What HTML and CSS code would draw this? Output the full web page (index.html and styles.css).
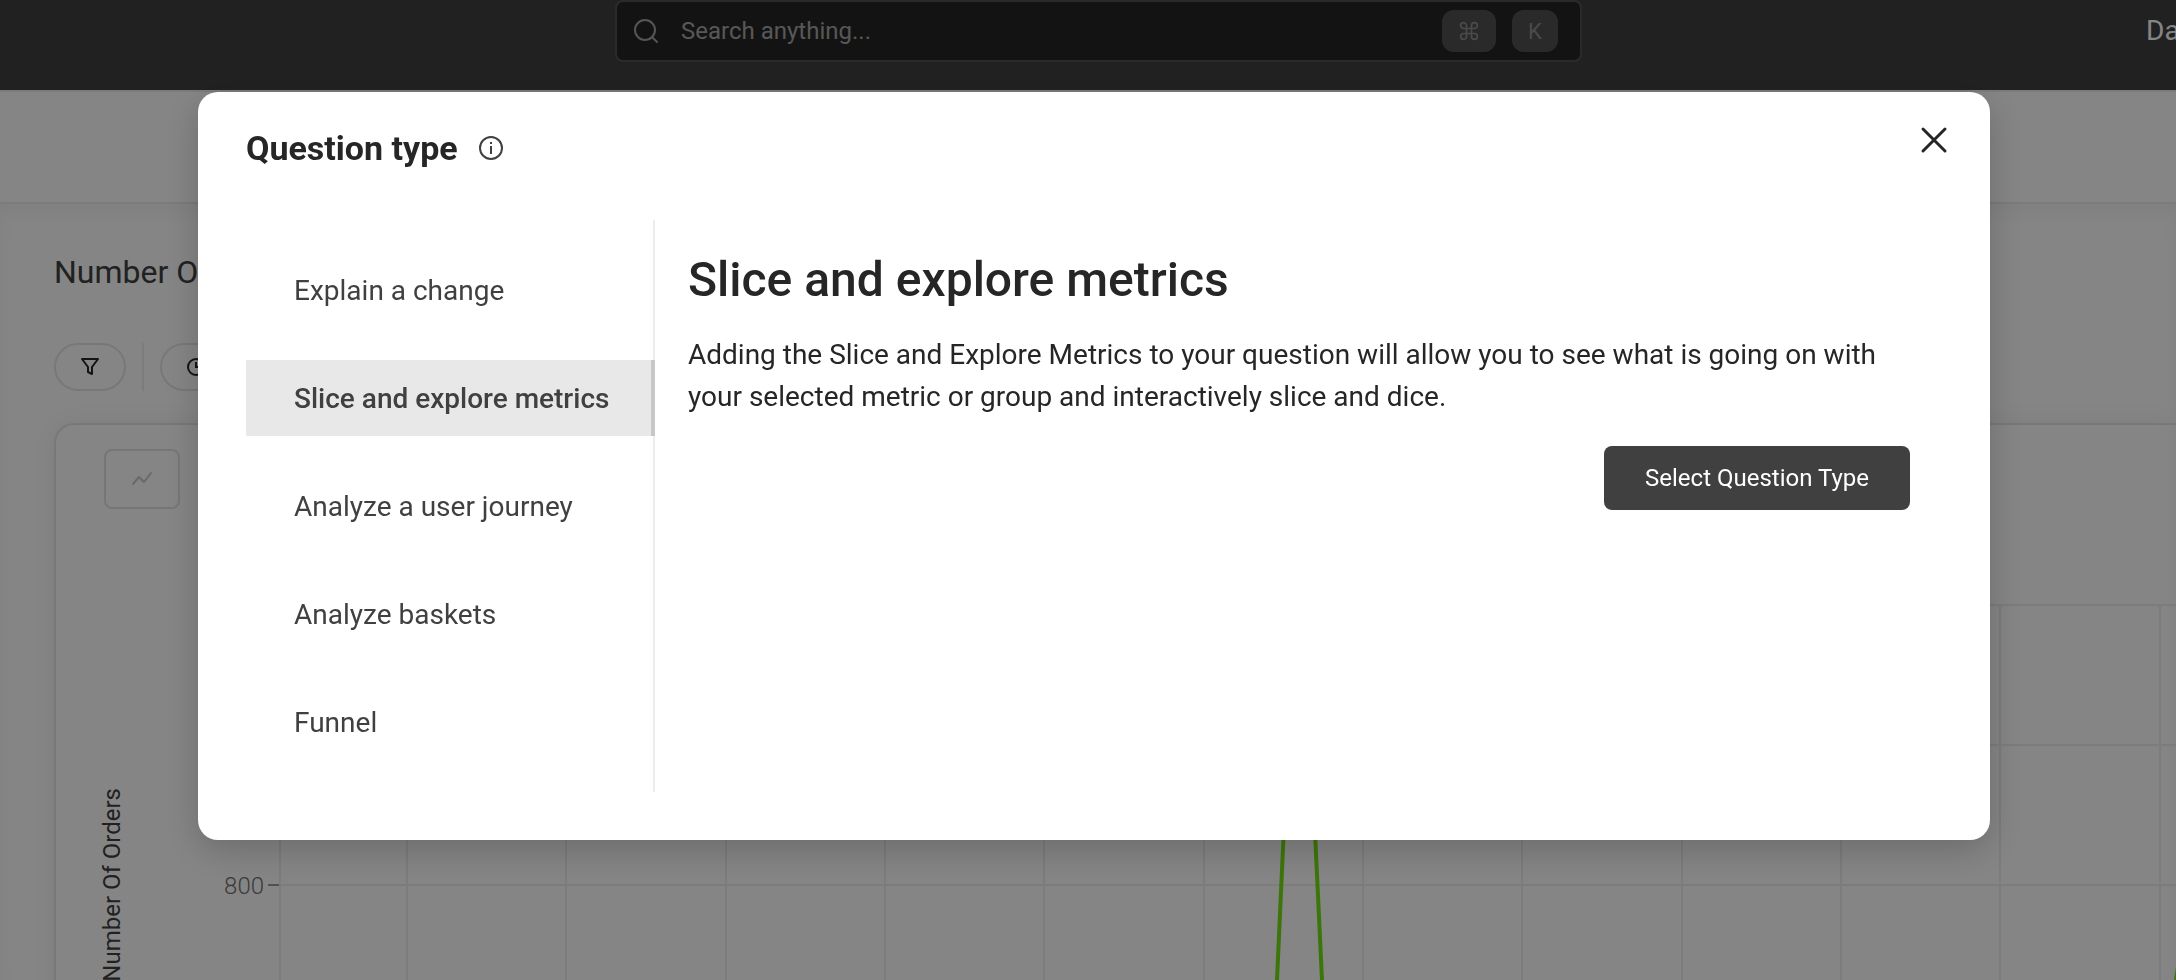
FILE: index.html
```html
<!DOCTYPE html>
<html lang="en">
<head>
<meta charset="utf-8">
<title>Question type</title>
<link rel="stylesheet" href="styles.css">
</head>
<body>
<div class="app">
  <header class="topbar">
    <label class="search">
      <svg class="search-icon" width="26" height="26" viewBox="0 0 26 26" fill="none" stroke="currentColor" stroke-width="2" stroke-linecap="round"><circle cx="12" cy="12" r="10"/><path d="M19 19l5 5"/></svg>
      <input class="search-input" type="text" placeholder="Search anything..." aria-label="Search">
      <kbd class="key key-cmd"><svg width="20" height="20" viewBox="0 0 24 24" fill="none" stroke="currentColor" stroke-width="2"><path d="M9 9V5.500A3.500 3.500 0 1 0 5.500 9h13A3.500 3.500 0 1 0 15 5.500v13a3.500 3.500 0 1 0 3.500-3.500h-13A3.500 3.500 0 1 0 9 18.500z"/></svg></kbd>
      <kbd class="key">K</kbd>
    </label>
    <a class="top-link" href="#">Da</a>
  </header>
  <div class="subbar"></div>
  <main class="page">
    <h1 class="page-title">Number Of Orders</h1>
    <div class="filters">
      <button class="pill" aria-label="Filter"><svg width="20" height="20" viewBox="0 0 20 20" fill="none" stroke="currentColor" stroke-width="2" stroke-linejoin="round"><path d="M2 2h16l-6 8v7l-4-2v-5z"/></svg></button>
      <span class="filter-divider"></span>
      <button class="pill" aria-label="Time range"><svg width="20" height="20" viewBox="0 0 20 20" fill="none" stroke="currentColor" stroke-width="2"><circle cx="10" cy="10" r="8"/><path d="M10 5v5h4"/></svg></button>
    </div>
    <section class="card">
      <button class="chart-type" aria-label="Line chart"><svg width="22" height="16" viewBox="0 0 22 16" fill="none" stroke="currentColor" stroke-width="2" stroke-linecap="round" stroke-linejoin="round"><path d="M2 13l6-7 5 5 7-9"/></svg></button>
      <div class="chart">
        <div class="axis-title">Number Of Orders</div>
        <div class="axis-ticks"><span class="tick">800</span></div>
        <svg class="plot" width="100%" height="376">
          <g class="grid">
            <path d="M12 0v376M139 0v376M298 0v376M458 0v376M617 0v376M776 0v376M936 0v376M1095 0v376M1254 0v376M1414 0v376M1573 0v376M1732 0v376M1892 0v376"/>
            <line x1="12" x2="100%" y1="1" y2="1"/><line x1="12" x2="100%" y1="141" y2="141"/><line x1="12" x2="100%" y1="281" y2="281"/>
          </g>
          <path class="tick-mark" d="M0 281h11"/>
          <path class="series" d="M1009 376L1031 -109L1054 376M1908 376l60 -400"/>
        </svg>
      </div>
    </section>
  </main>
</div>

<div class="overlay">
  <div class="modal" role="dialog" aria-modal="true" aria-labelledby="dialog-title">
    <header class="modal-header">
      <h2 class="modal-title" id="dialog-title">Question type</h2>
      <svg class="info" width="26" height="26" viewBox="0 0 26 26" fill="none" stroke="currentColor" stroke-width="2"><circle cx="13" cy="13" r="11"/><path d="M13 11v8M13 7v2"/></svg>
      <button class="close" aria-label="Close"><svg width="28" height="28" viewBox="0 0 28 28" fill="none" stroke="currentColor" stroke-width="3" stroke-linecap="round"><path d="M3 3l22 22M25 3L3 25"/></svg></button>
    </header>
    <div class="modal-body">
      <nav class="types">
        <button class="type">Explain a change</button>
        <button class="type type-active" aria-current="true">Slice and explore metrics</button>
        <button class="type">Analyze a user journey</button>
        <button class="type">Analyze baskets</button>
        <button class="type">Funnel</button>
      </nav>
      <section class="detail">
        <h3 class="detail-title">Slice and explore metrics</h3>
        <p class="detail-text">Adding the Slice and Explore Metrics to your question will allow you to see what is going on with your selected metric or group and interactively slice and dice.</p>
        <button class="select">Select Question Type</button>
      </section>
    </div>
  </div>
</div>
</body>
</html>
```
FILE: styles.css
```css
* { box-sizing: border-box; }
body { margin: 0; font-family: Roboto, "Liberation Sans", sans-serif; color: #262626; background: #fff; }
button, input, kbd { font: inherit; color: inherit; }
button { cursor: pointer; background: none; border: 0; padding: 0; }
h1, h2, h3, p { margin: 0; }
svg { display: block; flex: none; }

.app { height: 100vh; overflow: hidden; display: flex; flex-direction: column; }

.topbar { flex: none; height: 92px; display: grid; grid-template-columns: minmax(0, 1fr) 594px; align-items: start; padding-left: 615px; background: #404040; border-bottom: 2px solid #ececec; overflow: hidden; }
.search { height: 62px; display: flex; align-items: center; padding: 0 22px 0 16px; background: #262626; border: 2px solid #525252; border-radius: 8px; color: #a3a3a3; }
.search-input { flex: 1; min-width: 0; margin-left: 22px; padding: 0; background: none; border: 0; outline: 0; font-size: 24px; }
.search-input::placeholder { color: #a8a8a8; opacity: 1; }
.key { height: 42px; width: 46px; display: flex; align-items: center; justify-content: center; background: #525252; border-radius: 12px; color: #8f8f8f; font-size: 22px; }
.key-cmd { width: 54px; margin-right: 16px; }
.top-link { line-height: 62px; color: #fff; font-size: 28px; text-decoration: none; white-space: nowrap; justify-self: end; width: 30px; }

.subbar { flex: none; height: 112px; border-bottom: 2px solid #ebebeb; }
.page { flex: 1; min-height: 0; padding: 46px 0 0 54px; box-shadow: inset 0 12px 24px -8px #f2f2f2; display: flex; flex-direction: column; background: #fff; }
.page-title { font-size: 32px; line-height: 44px; font-weight: 400; color: #404040; }
.filters { display: flex; gap: 16px; margin: 49px 0 32px; align-items: center; }
.pill { width: 72px; height: 48px; display: flex; align-items: center; justify-content: center; border: 2px solid #e6e6e6; border-radius: 24px; }
.filter-divider { width: 2px; height: 48px; background: #ededed; }
.card { flex: none; height: 640px; padding: 24px 0 0 48px; border: 2px solid #e6e6e6; border-right: 0; border-radius: 20px 0 0 20px; box-shadow: 0 0 24px rgba(0, 0, 0, .06); }
.chart-type { width: 76px; height: 60px; display: flex; align-items: center; justify-content: center; border: 2px solid #e3e3e3; border-radius: 8px; color: #c9c9c9; }
.chart { display: grid; grid-template-columns: 16px 148px minmax(0, 1fr); padding-top: 95px; }
.axis-title { margin-top: 184px; font-size: 24px; line-height: 20px; writing-mode: vertical-rl; transform: rotate(180deg); white-space: nowrap; color: #404040; justify-self: center; align-self: start; }
.axis-ticks { padding: 266px 4px 0 0; text-align: right; }
.tick { font-size: 24px; line-height: 32px; font-weight: 300; color: #737373; }
.grid { stroke: #ededed; stroke-width: 2; }
.tick-mark { stroke: #999; stroke-width: 2; }
.series { fill: none; stroke: #74e014; stroke-width: 4; }

.overlay { position: fixed; inset: 0; padding: 92px 186px 0 198px; background: rgba(0, 0, 0, .48); }
.modal { padding: 0 48px 48px; background: #fff; border-radius: 20px; box-shadow: 0 10px 36px rgba(0, 0, 0, .2); }
.modal-header { height: 128px; display: flex; align-items: flex-start; padding-top: 34px; }
.modal-title { font-size: 34px; line-height: 44px; font-weight: 700; }
.info { margin: 9px 0 0 20px; color: #404040; }
.close { margin-left: auto; margin-right: -6px; }
.modal-body { display: grid; grid-template-columns: 409px minmax(0, 1fr); }
.types { display: flex; flex-direction: column; gap: 32px; padding: 32px 0; border-right: 2px solid #ededed; }
.type { height: 76px; padding-left: 48px; text-align: left; font-size: 28px; color: #404040; white-space: nowrap; }
.type-active { margin-right: -2px; background: #e8e8e8; border-right: 4px solid #c7c7c7; font-weight: 500; }
.detail { padding: 30px 32px 0 33px; display: flex; flex-direction: column; align-items: flex-start; }
.detail-title { font-size: 48px; line-height: 60px; font-weight: 500; }
.detail-text { margin-top: 24px; font-size: 28px; line-height: 42px; }
.select { align-self: flex-end; margin-top: 28px; height: 64px; width: 306px; background: #404040; border-radius: 8px; color: #fff; font-size: 24px; }
```
